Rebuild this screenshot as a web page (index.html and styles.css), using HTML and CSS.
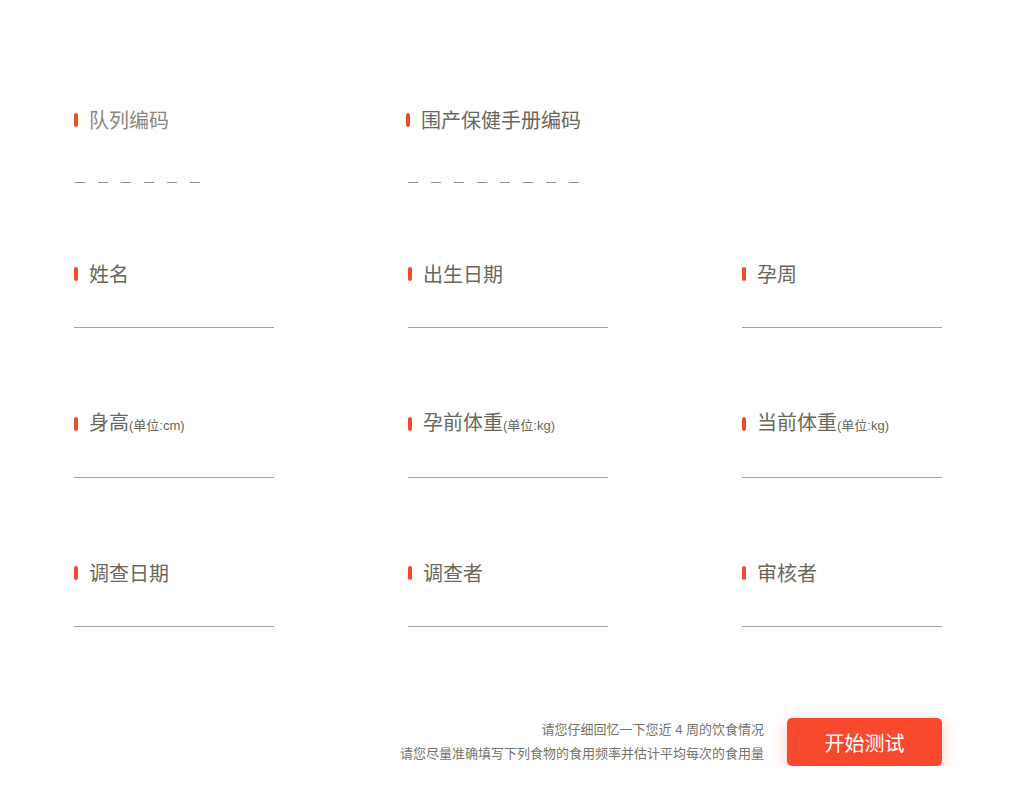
FILE: index.html
```html
<!DOCTYPE html>
<html lang="zh-CN">
<head>
<meta charset="utf-8">
<title>问卷信息</title>
<link rel="stylesheet" href="styles.css">
</head>
<body>
<div class="page">
  <div class="row-code">
    <div class="field">
      <div class="label muted"><span class="mark"></span><span class="text">队列编码</span></div>
      <div class="dashes"><span></span><span></span><span></span><span></span><span></span><span></span></div>
    </div>
    <div class="field">
      <div class="label"><span class="mark"></span><span class="text">围产保健手册编码</span></div>
      <div class="dashes shift"><span></span><span></span><span></span><span></span><span></span><span></span><span></span><span></span></div>
    </div>
  </div>

  <div class="grid">
    <div class="field">
      <div class="label"><span class="mark"></span><span class="text">姓名</span></div>
      <div class="line"></div>
    </div>
    <div class="field">
      <div class="label"><span class="mark"></span><span class="text">出生日期</span></div>
      <div class="line"></div>
    </div>
    <div class="field">
      <div class="label"><span class="mark"></span><span class="text">孕周</span></div>
      <div class="line"></div>
    </div>

    <div class="field">
      <div class="label"><span class="mark"></span><span class="text">身高<small class="unit">(单位:cm)</small></span></div>
      <div class="line"></div>
    </div>
    <div class="field">
      <div class="label"><span class="mark"></span><span class="text">孕前体重<small class="unit">(单位:kg)</small></span></div>
      <div class="line"></div>
    </div>
    <div class="field">
      <div class="label"><span class="mark"></span><span class="text">当前体重<small class="unit">(单位:kg)</small></span></div>
      <div class="line"></div>
    </div>

    <div class="field row-last">
      <div class="label"><span class="mark"></span><span class="text">调查日期</span></div>
      <div class="line"></div>
    </div>
    <div class="field row-last">
      <div class="label"><span class="mark"></span><span class="text">调查者</span></div>
      <div class="line"></div>
    </div>
    <div class="field row-last">
      <div class="label"><span class="mark"></span><span class="text">审核者</span></div>
      <div class="line"></div>
    </div>
  </div>

  <div class="footer">
    <div class="hint">
      <p>请您仔细回忆一下您近 4 周的饮食情况</p>
      <p>请您尽量准确填写下列食物的食用频率并估计平均每次的食用量</p>
    </div>
    <button class="start" type="button">开始测试</button>
  </div>
</div>
</body>
</html>
```

FILE: styles.css
```css
* { box-sizing: border-box; }

html, body {
  margin: 0;
  padding: 0;
  background: #ffffff;
}

body {
  font-family: "Noto Sans CJK SC", "Noto Sans", sans-serif;
  color: #66645a;
}

.page {
  width: 1016px;
  padding: 106px 74px 0 74px;
}

.row-code {
  display: grid;
  grid-template-columns: 200px 240px;
  column-gap: 132px;
}

.grid {
  margin-top: 77px;
  display: grid;
  grid-template-columns: repeat(3, 200px);
  column-gap: 134px;
  row-gap: 82px;
}

.field.row-last { margin-top: -1px; }

.label {
  display: flex;
  align-items: center;
  height: 28px;
  font-size: 20px;
  line-height: 28px;
  color: #6a685c;
  white-space: nowrap;
}

.label.muted { color: #8a887d; }

.mark {
  flex: none;
  width: 4px;
  height: 14px;
  border-radius: 2px;
  background: #f4492e;
  margin-right: 11px;
}

.unit {
  font-family: "Liberation Sans", "Noto Sans CJK SC", sans-serif;
  font-size: 13px;
  color: #6a685c;
}

.dashes {
  display: flex;
  gap: 13px;
  margin-top: 48px;
  padding-left: 1px;
}

.dashes.shift { padding-left: 2px; }

.dashes span {
  display: block;
  width: 10px;
  height: 1px;
  background: #8f8d82;
}

.line {
  height: 40px;
  border-bottom: 1px solid #a3a296;
}

.footer {
  margin-top: 91px;
  display: flex;
  justify-content: flex-end;
  align-items: center;
  gap: 23px;
}

.hint {
  text-align: right;
  font-family: "Liberation Sans", "Noto Sans CJK SC", sans-serif;
  font-size: 13px;
  line-height: 24px;
  color: #75736a;
}

.hint p { margin: 0; }

.start {
  width: 155px;
  height: 48px;
  border: none;
  border-radius: 5px;
  background: #f8492f;
  color: #ffffff;
  font-family: "Noto Sans CJK SC", sans-serif;
  font-size: 20px;
  box-shadow: 0 4px 16px rgba(248, 73, 47, 0.3);
  cursor: pointer;
}
```
